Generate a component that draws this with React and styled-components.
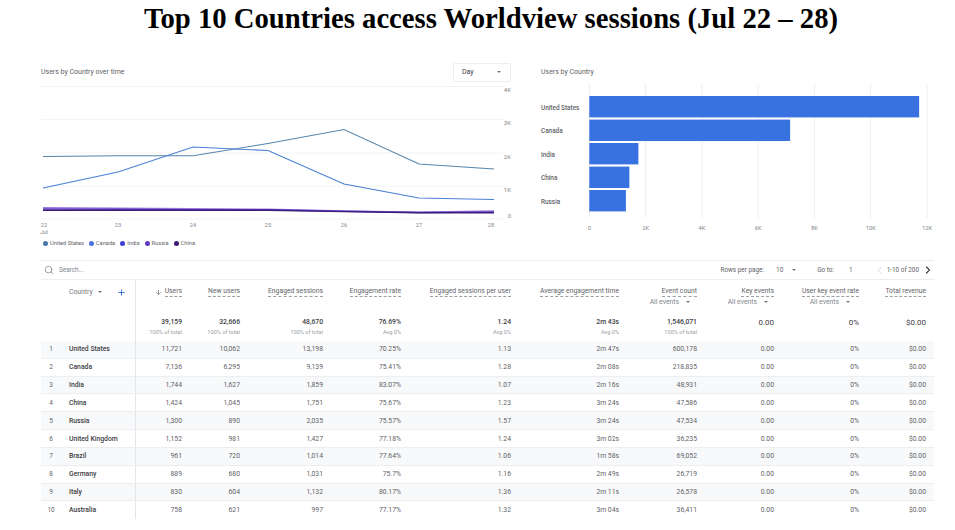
import React from "react";
import styled, { createGlobalStyle } from "styled-components";
import { Search, Plus, ArrowDown, ChevronLeft, ChevronRight } from "lucide-react";

const Global = createGlobalStyle`
  html, body { margin: 0; padding: 0; background: #fff; }
  body { font-family: Roboto, "Liberation Sans", sans-serif; color: #3c4043; width: 955px; height: 530px; overflow: hidden; }
`;

const Page = styled.div`
  width: 955px;
  height: 530px;
  display: flex;
  flex-direction: column;
  overflow: hidden;
`;
const Title = styled.h1`
  margin: 0;
  height: 62px;
  padding: 2px 0 0 27px;
  box-sizing: border-box;
  text-align: center;
  font: bold 28.7px/32px "Liberation Serif", serif;
  color: #000;
  white-space: nowrap;
`;
const Charts = styled.section`
  display: flex;
  height: 198px;
  flex: none;
`;
const LinePanel = styled.div`
  width: 530px;
  flex: none;
  display: flex;
  flex-direction: column;
`;
const BarPanel = styled.div`
  width: 425px;
  flex: none;
  display: flex;
  flex-direction: column;
`;
const PanelHead = styled.div`
  height: 21px;
  margin-top: -0.5px;
  margin-bottom: 1px;
  display: flex;
  align-items: center;
  justify-content: space-between;
  padding: 0 ${p => p.$right || 0}px 0 ${p => p.$left || 0}px;
  font-size: 7px;
  color: #5f6368;
  flex: none;
`;
const Select = styled.div`
  width: 58px;
  height: 19px;
  box-sizing: border-box;
  border: 1px solid #eceef0;
  border-radius: 2px;
  display: flex;
  align-items: center;
  justify-content: space-between;
  padding: 0 9px 0 8px;
  font-size: 7px;
  color: #3c4043;
`;
const Caret = styled.span`
  display: inline-block;
  width: 0;
  height: 0;
  border-left: 2px solid transparent;
  border-right: 2px solid transparent;
  border-top: 2.5px solid #70757a;
  margin-left: ${p => p.$gap || 0}px;
  vertical-align: middle;
`;
const ChartSvg = styled.svg`
  display: block;
  flex: none;
  text { font-family: Roboto, "Liberation Sans", sans-serif; }
`;
const Legend = styled.div`
  display: flex;
  gap: 5px;
  font-size: 5.7px;
  line-height: 7px;
  color: #5f6368;
  margin-top: 1px;
  padding-left: 43px;
`;
const LegendItem = styled.span`
  display: inline-flex;
  align-items: center;
  gap: 2px;
`;
const Dot = styled.i`
  width: 5px;
  height: 5px;
  border-radius: 50%;
  background: ${p => p.$c};
`;

const Table = styled.section`
  margin: 0 21px 0 41px;
  width: 893px;
  border-top: 1px solid #eceef0;
`;
const SearchBar = styled.div`
  height: 18px;
  display: flex;
  align-items: center;
  border-bottom: 1px solid #eceef0;
  padding: 0 0 0 3px;
  font-size: 6.4px;
  color: #80868b;
`;
const SearchText = styled.span`
  margin-left: 5px;
`;
const Pager = styled.div`
  margin-left: auto;
  display: flex;
  align-items: center;
  color: #5f6368;
`;
const PagerItem = styled.span`
  margin-left: ${p => p.$gap || 0}px;
  display: inline-flex;
  align-items: center;
`;
const COLS = "28px 67px 46px 58px 83px 78px 110px 108px 78px 77px 85px 67px";
const HeadRow = styled.div`
  display: grid;
  grid-template-columns: ${COLS};
  height: 32px;
  box-sizing: border-box;
  font-size: 6.8px;
  color: #5f6368;
`;
const TotalRow = styled.div`
  display: grid;
  grid-template-columns: ${COLS};
  height: 29px;
  box-sizing: border-box;
`;
const Row = styled.div`
  display: grid;
  grid-template-columns: ${COLS};
  height: 17.83px;
  box-sizing: border-box;
  align-items: stretch;
  border-bottom: 1px solid #eceef0;
  background: ${p => (p.$odd ? "#f8f9fa" : "#fff")};
  font-size: 6.8px;
  color: #5f6368;
  &:last-child { border-bottom: 0; }
`;
const Index = styled.div`
  display: flex;
  align-items: center;
  justify-content: center;
  padding-right: 8px;
  font-size: 6.4px;
`;
const Name = styled.div`
  display: flex;
  align-items: center;
  font-weight: 500;
  color: #3c4043;
  border-right: 1px solid #e3e5e8;
`;
const Num = styled.div`
  display: flex;
  align-items: center;
  justify-content: flex-end;
`;
const CountryHead = styled.div`
  display: flex;
  align-items: flex-start;
  justify-content: space-between;
  padding: 8px 9px 0 0;
  color: #757a80;
  border-right: 1px solid #e3e5e8;
`;
const BlankName = styled.div`
  border-right: 1px solid #e3e5e8;
`;
const Metric = styled.div`
  display: flex;
  flex-direction: column;
  align-items: flex-end;
  padding-top: 7px;
  white-space: nowrap;
`;
const MetricLabel = styled.span`
  display: inline-flex;
  align-items: center;
  gap: 3px;
`;
const Dashed = styled.span`
  border-bottom: 1px dashed #9aa0a6;
  line-height: 8px;
  padding-bottom: 1px;
`;
const Sub = styled.span`
  margin-top: 1px;
  font-size: 6.8px;
  line-height: 8px;
  color: #80868b;
  padding-right: ${p => p.$right || 0}px;
`;
const Total = styled.div`
  display: flex;
  flex-direction: column;
  align-items: flex-end;
  padding-top: 6px;
  white-space: nowrap;
`;
const TotalValue = styled.span`
  font-size: 6.8px;
  line-height: 9px;
  font-weight: 500;
  color: #3c4043;
`;
const BigValue = styled(TotalValue)`
  font-size: 8px;
  font-weight: 400;
`;
const TotalNote = styled.span`
  margin-top: 2px;
  font-size: 5.6px;
  line-height: 7px;
  color: #9aa0a6;
`;

const X = [43, 118, 193, 268, 344, 419, 494];
const toPts = ys => ys.map((y, i) => `${X[i]},${y - 84}`).join(" ");
const series = [
  { c: "#5685ab", w: 1.1, y: [156.5, 155.7, 155.7, 143.5, 129.5, 164, 169] },
  { c: "#4a7fd6", w: 1.1, y: [188, 172, 147, 150.5, 184, 198, 199.5] },
  { c: "#9b7be0", w: 1.4, y: [207.8, 208.2, 208.8, 209.3, 211, 212.2, 211] },
  { c: "#6240c4", w: 1.4, y: [209, 209.3, 209.6, 209.8, 211.3, 212.5, 212] },
  { c: "#3d1b78", w: 1.4, y: [210.3, 210.3, 210.3, 210.3, 211.6, 212.8, 212.8] },
];
const legend = [
  ["United States", "#4a76a8"],
  ["Canada", "#4a6fe0"],
  ["India", "#3f3fd9"],
  ["Russia", "#6038c0"],
  ["China", "#3d1b78"],
];
const LineChart = () => (
  <ChartSvg width="530" height="155" viewBox="0 0 530 155">
    {[86.5, 119.5, 153, 186, 219].map(y => (
      <line key={y} x1="41" x2="505" y1={y - 84} y2={y - 84} stroke="#f1f3f4" strokeWidth="1" />
    ))}
    {[["4K", 90], ["3K", 123], ["2K", 156.5], ["1K", 189.5], ["0", 215.5]].map(([t, y]) => (
      <text key={t} x="511" y={y - 84 + 2} fontSize="6" fill="#80868b" textAnchor="end">{t}</text>
    ))}
    {series.map(s => (
      <polyline key={s.c} points={toPts(s.y)} fill="none" stroke={s.c} strokeWidth={s.w} />
    ))}
    {[22, 23, 24, 25, 26, 27, 28].map((d, i) => (
      <text key={d} x={i === 6 ? 491 : X[i] + (i === 0 ? 1 : 0)} y="143" fontSize="5.6" fill="#80868b" textAnchor="middle">{d}</text>
    ))}
    <text x="44" y="149.5" fontSize="5.6" fill="#80868b" textAnchor="middle">Jul</text>
  </ChartSvg>
);

const bars = [
  ["United States", 11721, 96],
  ["Canada", 7136, 119.6],
  ["India", 1744, 143],
  ["China", 1424, 166.6],
  ["Russia", 1300, 190],
];
const BarChart = () => {
  const x0 = 59.3;
  const sc = 337.7 / 12000;
  return (
    <ChartSvg width="425" height="155" viewBox="0 0 425 155">
      {[0, 2, 4, 6, 8, 10, 12].map(k => {
        const x = x0 + k * 1000 * sc;
        return (
          <g key={k}>
            <line x1={x} x2={x} y1="0" y2="134" stroke="#eceef0" strokeWidth="1" />
            <text x={x} y="146" fontSize="5.8" fill="#80868b" textAnchor="middle">{k ? `${k}K` : "0"}</text>
          </g>
        );
      })}
      {bars.map(([n, v, y]) => (
        <g key={n}>
          <rect x={x0} y={y - 84} width={v * sc} height="21.4" fill="#3871e0" />
          <text x="11" y={y - 84 + 13.5} fontSize="6.4" fontWeight="500" fill="#5f6368">{n}</text>
        </g>
      ))}
    </ChartSvg>
  );
};

const heads = [
  { l: "Users", sort: true },
  { l: "New users" },
  { l: "Engaged sessions" },
  { l: "Engagement rate" },
  { l: "Engaged sessions per user" },
  { l: "Average engagement time" },
  { l: "Event count", s: 7 },
  { l: "Key events", s: 6 },
  { l: "User key event rate", s: 9 },
  { l: "Total revenue" },
];
const totals = [
  ["39,159", "100% of total"],
  ["32,666", "100% of total"],
  ["48,670", "100% of total"],
  ["76.69%", "Avg 0%"],
  ["1.24", "Avg 0%"],
  ["2m 43s", "Avg 0%"],
  ["1,546,071", "100% of total"],
  ["0.00", null, true],
  ["0%", null, true],
  ["$0.00", null, true],
];
const rows = [
  ["United States", "11,721", "10,062", "13,198", "70.25%", "1.13", "2m 47s", "600,178"],
  ["Canada", "7,136", "6,295", "9,139", "75.41%", "1.28", "2m 08s", "218,835"],
  ["India", "1,744", "1,627", "1,859", "83.07%", "1.07", "2m 16s", "48,931"],
  ["China", "1,424", "1,045", "1,751", "75.67%", "1.23", "3m 24s", "47,586"],
  ["Russia", "1,300", "890", "2,035", "75.57%", "1.57", "3m 24s", "47,534"],
  ["United Kingdom", "1,152", "981", "1,427", "77.18%", "1.24", "3m 02s", "36,235"],
  ["Brazil", "961", "720", "1,014", "77.64%", "1.06", "1m 58s", "69,052"],
  ["Germany", "889", "680", "1,031", "75.7%", "1.16", "2m 49s", "26,719"],
  ["Italy", "830", "604", "1,132", "80.17%", "1.36", "2m 11s", "26,578"],
  ["Australia", "758", "621", "997", "77.17%", "1.32", "3m 04s", "36,411"],
];

export default function App() {
  return (
    <Page>
      <Global />
      <Title>Top 10 Countries access Worldview sessions (Jul 22 – 28)</Title>
      <Charts>
        <LinePanel>
          <PanelHead $left={41} $right={19}>
            <span>Users by Country over time</span>
            <Select>Day<Caret /></Select>
          </PanelHead>
          <LineChart />
          <Legend>
            {legend.map(([n, c]) => (
              <LegendItem key={n}><Dot $c={c} />{n}</LegendItem>
            ))}
          </Legend>
        </LinePanel>
        <BarPanel>
          <PanelHead $left={11}>
            <span>Users by Country</span>
          </PanelHead>
          <BarChart />
        </BarPanel>
      </Charts>
      <Table>
        <SearchBar>
          <Search size={10} color="#70757a" strokeWidth={1.6} />
          <SearchText>Search...</SearchText>
          <Pager>
            <span>Rows per page:</span>
            <PagerItem $gap={12}>10<Caret $gap={9} /></PagerItem>
            <PagerItem $gap={21}>Go to:</PagerItem>
            <PagerItem $gap={15}>1</PagerItem>
            <PagerItem $gap={21}><ChevronLeft size={11} color="#bdc1c6" strokeWidth={1.5} /></PagerItem>
            <PagerItem $gap={2}>1-10 of 200</PagerItem>
            <PagerItem $gap={3}><ChevronRight size={12} color="#3c4043" strokeWidth={2.4} /></PagerItem>
          </Pager>
        </SearchBar>
        <HeadRow>
          <div />
          <CountryHead>
            <span>Country<Caret $gap={5} /></span>
            <Plus size={9} color="#1f5fd0" strokeWidth={2.2} />
          </CountryHead>
          {heads.map(h => (
            <Metric key={h.l}>
              <MetricLabel>
                {h.sort && <ArrowDown size={7} color="#5f6368" />}
                <Dashed>{h.l}</Dashed>
              </MetricLabel>
              {h.s !== undefined && <Sub $right={h.s}>All events<Caret $gap={7} /></Sub>}
            </Metric>
          ))}
        </HeadRow>
        <TotalRow>
          <div />
          <BlankName />
          {totals.map(([v, n, big], i) => (
            <Total key={i}>
              {big ? <BigValue>{v}</BigValue> : <TotalValue>{v}</TotalValue>}
              {n && <TotalNote>{n}</TotalNote>}
            </Total>
          ))}
        </TotalRow>
        {rows.map((r, i) => (
          <Row key={r[0]} $odd={i % 2 === 0}>
            <Index>{i + 1}</Index>
            <Name>{r[0]}</Name>
            {r.slice(1).map((v, j) => <Num key={j}>{v}</Num>)}
            <Num>0.00</Num>
            <Num>0%</Num>
            <Num>$0.00</Num>
          </Row>
        ))}
      </Table>
    </Page>
  );
}
